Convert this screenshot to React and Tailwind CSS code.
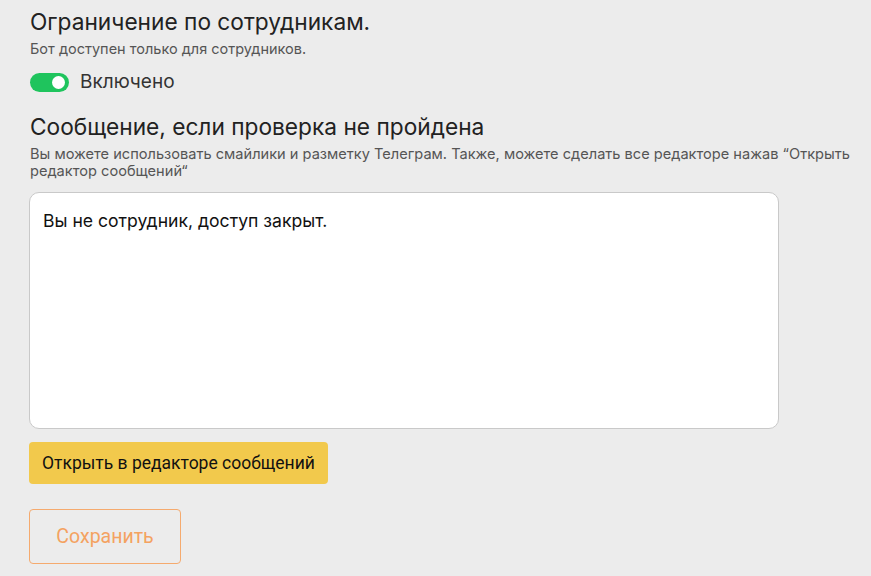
export default function App() {
  return (
    <div className="min-h-screen bg-[#ececec] pl-[30px] pr-[15px] pt-[7px] font-['Inter',sans-serif]">
      {/* Ограничение */}
      <h2 className="text-[22.7px] leading-[30px] text-[#222]">Ограничение по сотрудникам.</h2>
      <p className="mt-[3px] text-[14.5px] leading-[18px] text-[#555]">Бот доступен только для сотрудников.</p>
      <div className="mt-[13px] flex items-center gap-[11px]">
        <button className="relative h-[19px] w-[39px] rounded-full bg-[#1fc45d]">
          <span className="absolute right-[4px] top-[3px] h-[13px] w-[13px] rounded-full bg-white" />
        </button>
        <span className="text-[19px] leading-[22px] text-[#333]">Включено</span>
      </div>

      {/* Сообщение */}
      <h2 className="mt-[20px] text-[22.7px] leading-[28px] text-[#222]">
        Сообщение, если проверка не пройдена
      </h2>
      <p className="mt-[5px] text-[14.6px] leading-[17px] text-[#555]">
        Вы можете использовать смайлики и разметку Телеграм. Также, можете сделать все редакторе нажав “Открыть редактор сообщений“
      </p>
      <textarea
        className="mt-[12px] block h-[237px] w-[750px] -ml-px resize-none rounded-[10px] border border-[#c9c9c9] bg-white px-[13px] py-[16px] text-[17.6px] leading-[24px] text-[#111] outline-none"
        defaultValue="Вы не сотрудник, доступ закрыт."
      />
      <button className="mt-[13px] -ml-px block h-[42px] rounded-[4px] bg-[#f2c94c] px-[13px] font-['Roboto',sans-serif] text-[17.5px] text-[#111]">
        Открыть в редакторе сообщений
      </button>
      <button className="mt-[25px] -ml-px block h-[55px] w-[152px] rounded-[4px] border border-[#f5aa6e] font-['Roboto',sans-serif] text-[19.5px] text-[#f4a261]">
        Сохранить
      </button>
    </div>
  );
}
